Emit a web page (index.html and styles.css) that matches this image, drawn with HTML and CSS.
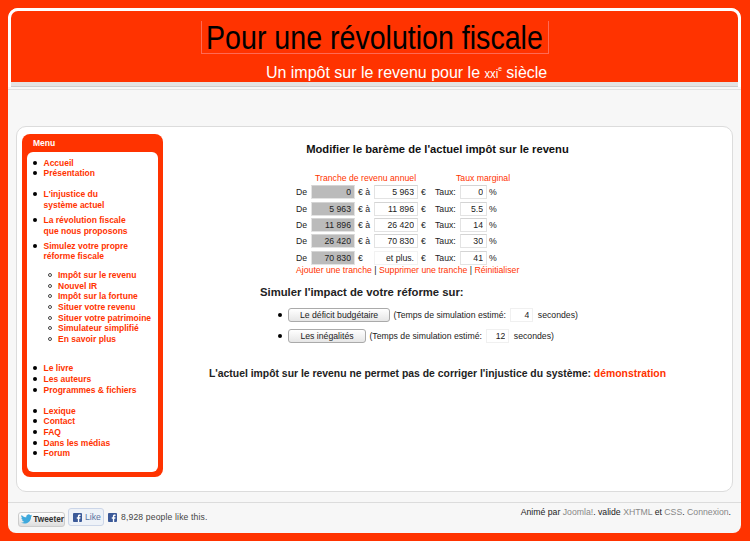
FILE: index.html
```html
<!DOCTYPE html>
<html lang="fr">
	<head>
		<meta charset="UTF-8">
		<meta name="viewport" content="width=device-width, initial-scale=1.0">
		<title>Pour une révolution fiscale</title>
		<link rel="stylesheet" href="styles.css">
	</head>
	<body>
		<div class="wrapper">
			<header class="top">
				<div class="banner">
					<h1 class="site-title"><span class="squeeze">Pour une révolution fiscale</span></h1>
					<p class="site-sub"><span class="squeeze">Un impôt sur le revenu pour le <span class="sc">xxi</span><sup>e</sup> siècle</span></p>
				</div>
				<div class="band"></div>
			</header>
			<div class="rule"></div>

			<main class="content">
				<nav class="menu">
					<div class="menu-title">Menu</div>
					<div class="menu-body">
						<ul class="nav nav-a">
							<li><a href="#">Accueil</a></li>
							<li><a href="#">Présentation</a></li>
						</ul>
						<ul class="nav nav-b">
							<li><a href="#">L'injustice du<br>système actuel</a></li>
							<li><a href="#">La révolution fiscale<br>que nous proposons</a></li>
							<li><a href="#">Simulez votre propre<br>réforme fiscale</a></li>
						</ul>
						<ul class="nav sub">
							<li><a href="#">Impôt sur le revenu</a></li>
							<li><a href="#">Nouvel IR</a></li>
							<li><a href="#">Impôt sur la fortune</a></li>
							<li><a href="#">Situer votre revenu</a></li>
							<li><a href="#">Situer votre patrimoine</a></li>
							<li><a href="#">Simulateur simplifié</a></li>
							<li><a href="#">En savoir plus</a></li>
						</ul>
						<ul class="nav nav-c">
							<li><a href="#">Le livre</a></li>
							<li><a href="#">Les auteurs</a></li>
							<li><a href="#">Programmes &amp; fichiers</a></li>
						</ul>
						<ul class="nav nav-d">
							<li><a href="#">Lexique</a></li>
							<li><a href="#">Contact</a></li>
							<li><a href="#">FAQ</a></li>
							<li><a href="#">Dans les médias</a></li>
							<li><a href="#">Forum</a></li>
						</ul>
					</div>
				</nav>

				<section class="article">
					<h2 class="heading">Modifier le barème de l'actuel impôt sur le revenu</h2>

					<div class="bareme">
						<div class="bareme-head">
							<span class="head-tranche">Tranche de revenu annuel</span>
							<span class="head-taux">Taux marginal</span>
						</div>
						<div class="row">
							<span class="de">De</span>
							<input class="field from" value="0" readonly>
							<span class="unit">€ à</span>
							<input class="field to" value="5 963">
							<span class="eur">€</span>
							<span class="taux">Taux:</span>
							<input class="field pct" value="0">
							<span>%</span>
						</div>
						<div class="row">
							<span class="de">De</span>
							<input class="field from" value="5 963" readonly>
							<span class="unit">€ à</span>
							<input class="field to" value="11 896">
							<span class="eur">€</span>
							<span class="taux">Taux:</span>
							<input class="field pct" value="5.5">
							<span>%</span>
						</div>
						<div class="row">
							<span class="de">De</span>
							<input class="field from" value="11 896" readonly>
							<span class="unit">€ à</span>
							<input class="field to" value="26 420">
							<span class="eur">€</span>
							<span class="taux">Taux:</span>
							<input class="field pct" value="14">
							<span>%</span>
						</div>
						<div class="row">
							<span class="de">De</span>
							<input class="field from" value="26 420" readonly>
							<span class="unit">€ à</span>
							<input class="field to" value="70 830">
							<span class="eur">€</span>
							<span class="taux">Taux:</span>
							<input class="field pct" value="30">
							<span>%</span>
						</div>
						<div class="row">
							<span class="de">De</span>
							<input class="field from" value="70 830" readonly>
							<span class="unit">€</span>
							<input class="field to plain" value="et plus." readonly>
							<span class="eur">€</span>
							<span class="taux">Taux:</span>
							<input class="field pct" value="41">
							<span>%</span>
						</div>
						<div class="actions">
							<a href="#">Ajouter une tranche</a> | <a href="#">Supprimer une tranche</a> | <a href="#">Réinitialiser</a>
						</div>
					</div>

					<h3 class="sim-title">Simuler l'impact de votre réforme sur:</h3>
					<ul class="sim-list">
						<li>
							<button class="btn btn-wide" type="button">Le déficit budgétaire</button>
							<span>(Temps de simulation estimé:</span>
							<input class="field time" value="4">
							<span>secondes)</span>
						</li>
						<li>
							<button class="btn btn-short" type="button">Les inégalités</button>
							<span>(Temps de simulation estimé:</span>
							<input class="field time" value="12">
							<span>secondes)</span>
						</li>
					</ul>

					<p class="demo">L'actuel impôt sur le revenu ne permet pas de corriger l'injustice du système: <a href="#">démonstration</a></p>
				</section>
			</main>

			<footer class="foot">
				<div class="social">
					<a class="tweet" href="#">
						<svg class="bird" viewBox="0 0 24 24" width="12" height="12"><path fill="#3fa9dc" d="M23.6 4.6c-.9.4-1.8.7-2.800.8 1-.6 1.800-1.600 2.100-2.700-.9.600-2 1-3.100 1.200a4.900 4.900 0 0 0-8.400 4.500C7.400 8.200 3.800 6.200 1.400 3.200a4.900 4.900 0 0 0 1.500 6.600c-.8 0-1.600-.2-2.200-.6v.1c0 2.400 1.700 4.400 3.900 4.800-.7.200-1.500.2-2.200.1.600 2 2.400 3.400 4.600 3.400A9.900 9.900 0 0 1 0 19.600 14 14 0 0 0 7.500 21.800c9.100 0 14-7.500 14-14v-.6c1-.7 1.800-1.600 2.100-2.600z"/></svg>
						Tweeter
					</a>
					<a class="like" href="#">
						<svg class="fb" viewBox="0 0 10 10" width="9" height="9"><rect width="10" height="10" rx="1" fill="#3b5998"/><path fill="#fff" d="M6.900 10V6.300h1.200l.2-1.500H6.900v-.9c0-.4.100-.7.700-.7h.8V1.900c-.1 0-.6-.1-1.100-.1-1.100 0-1.900.7-1.900 1.900v1.100H4.200v1.500h1.200V10z"/></svg>
						Like
					</a>
					<svg class="fb fb-count" viewBox="0 0 10 10" width="9" height="9"><rect width="10" height="10" rx="1" fill="#3b5998"/><path fill="#fff" d="M6.900 10V6.300h1.200l.2-1.500H6.900v-.9c0-.4.100-.7.700-.7h.8V1.900c-.1 0-.6-.1-1.100-.1-1.100 0-1.900.7-1.900 1.900v1.100H4.200v1.500h1.200V10z"/></svg>
					<span class="count">8,928 people like this.</span>
				</div>
				<p class="credits">Animé par <a href="#">Joomla!</a>. valide <a href="#">XHTML</a> et <a href="#">CSS</a>. <a href="#">Connexion</a>.</p>
			</footer>
		</div>
	</body>
</html>
```

FILE: styles.css
```css
html, body {
	margin: 0;
	height: 100%;
	overflow: hidden;
}
body {
	background-color: #ff3300;
	padding: 8px 8px 0 8px;
	box-sizing: border-box;
	font-family: "Liberation Sans", Arial, sans-serif;
	font-size: 8.7px;
	color: #222;
}
a {
	text-decoration: none;
	color: #ff3300;
}
.wrapper {
	width: 733px;
	height: 525px;
	background-color: #f7f7f7;
	border-radius: 10px 10px 8px 8px;
	display: flex;
	flex-direction: column;
}

/* header */
.top {
	border: 3px solid #fff;
	border-bottom: none;
	border-radius: 10px 10px 0 0;
	background-color: #fff;
}
.banner {
	height: 71px;
	background-color: #ff3300;
	border-radius: 7px 7px 0 0;
	display: flex;
	flex-direction: column;
	align-items: center;
	box-sizing: border-box;
	padding-top: 10px;
}
/* no narrow face installed, so the header type is squeezed */
.squeeze {
	display: inline-block;
	white-space: nowrap;
}
.site-title {
	margin: 0;
	width: 348px;
	height: 33px;
	box-sizing: border-box;
	border: 1px solid #ff6a55;
	border-top: none;
	display: flex;
	justify-content: center;
	font-weight: normal;
	font-size: 33px;
	line-height: 34px;
	color: #000;
}
.site-title .squeeze {
	flex: none;
	transform: scaleX(0.866);
}
.site-sub {
	margin: 9px 0 0 0;
	width: 348px;
	padding-right: 1px;
	box-sizing: border-box;
	font-size: 17px;
	line-height: 20px;
	text-align: right;
	color: #fff;
}
.site-sub .squeeze {
	transform: scaleX(0.94);
	transform-origin: right center;
}
.sc {
	font-size: 12px;
}
.site-sub sup {
	font-size: 7px;
	line-height: 0;
}
.band {
	height: 5px;
	background-color: #e3e3e3;
	border-bottom: 1px solid #ccc;
	box-sizing: border-box;
}
.rule {
	height: 1px;
	margin-top: 2px;
	background-color: #e2e2e2;
}

/* main box */
.content {
	margin: 36px 8px 0 8px;
	height: 366px;
	box-sizing: border-box;
	background-color: #fff;
	border: 1px solid #dcdcdc;
	border-radius: 10px;
	padding: 7px 5px;
	display: flex;
	align-items: flex-start;
}

/* menu */
.menu {
	width: 141px;
	height: 343px;
	flex: none;
	box-sizing: border-box;
	background-color: #ff3300;
	border-radius: 8px;
	padding: 0 5px 5px 5px;
	display: flex;
	flex-direction: column;
}
.menu-title {
	height: 18px;
	line-height: 18px;
	padding-left: 6px;
	font-size: 8.5px;
	font-weight: bold;
	color: #fff;
}
.menu-body {
	flex: 1;
	background-color: #fff;
	border-radius: 6px;
	font-size: 8.5px;
	font-weight: bold;
	line-height: 10.67px;
	padding-top: 5.500px;
}
.nav {
	margin: 0;
	padding: 0 0 0 16.500px;
	list-style: none;
}
.nav li::before {
	content: "";
	display: inline-block;
	box-sizing: border-box;
	width: 4px;
	height: 4px;
	margin: 0 6.500px 0 -10.500px;
	vertical-align: 1px;
	border-radius: 50%;
	background-color: #000;
}
.nav-b {
	margin-top: 10.500px;
}
.nav-b li {
	margin-bottom: 4.300px;
}
.sub {
	margin-top: 8px;
	padding-left: 31px;
}
.sub li::before {
	background-color: #fff;
	border: 1px solid #444;
}
.nav-c {
	margin-top: 18.500px;
}
.nav-d {
	margin-top: 10.500px;
}

/* simulator */
.article {
	flex: 1;
	min-width: 0;
	color: #222;
}
.heading {
	margin: 8px 0 0 0;
	padding-right: 15px;
	font-size: 11.2px;
	line-height: 14px;
	text-align: center;
	color: #111;
}
.bareme {
	margin: 16px 0 0 133px;
	width: 240px;
}
.bareme-head {
	height: 12px;
	line-height: 12px;
	color: #ff3300;
	display: flex;
}
.head-tranche {
	margin-left: 19px;
	width: 141px;
}
.row {
	height: 16.400px;
	display: flex;
	align-items: center;
	white-space: nowrap;
}
.de {
	width: 15px;
}
.field {
	box-sizing: border-box;
	height: 14px;
	padding: 0 3px;
	margin: 0;
	border: 1px solid #e3e3e3;
	border-top-color: #d4d4d4;
	background-color: #fff;
	font-family: "Liberation Sans", sans-serif;
	font-size: 8.7px;
	color: #222;
	text-align: right;
	outline: none;
}
.from {
	width: 44px;
	background-color: #bbb;
}
.unit {
	width: 16px;
	margin-left: 3px;
}
.to {
	width: 44px;
}
.plain {
	border-color: #f2f2f2;
}
.eur {
	width: 14px;
	margin-left: 3px;
}
.taux {
	width: 25px;
}
.pct {
	width: 27px;
	margin-right: 2px;
}
.actions {
	margin-top: -1px;
	line-height: 11px;
	white-space: nowrap;
}
.sim-title {
	margin: 9px 0 0 97px;
	font-size: 11.3px;
	line-height: 14px;
	color: #222;
}
.sim-list {
	margin: 9px 0 0 0;
	padding: 0 0 0 125px;
	list-style: none;
}
.sim-list li {
	height: 21px;
}
.sim-list li::before {
	content: "";
	display: inline-block;
	width: 4px;
	height: 4px;
	margin: 0 3.600px 0 -10px;
	vertical-align: middle;
	border-radius: 50%;
	background-color: #000;
}
.sim-list li > * {
	vertical-align: middle;
}
.btn {
	box-sizing: border-box;
	height: 14px;
	padding: 0;
	margin: 0 1px 0 0;
	border: 1px solid #aaa;
	border-radius: 3px;
	background: linear-gradient(#fff, #e6e6e6);
	font-family: "Liberation Sans", sans-serif;
	font-size: 8.7px;
	color: #222;
}
.btn-wide {
	width: 102px;
}
.btn-short {
	width: 78px;
}
.time {
	width: 23px;
	margin: 0 2px;
	border-color: #f0f0f0;
}
.demo {
	margin: 17px 0 0 0;
	padding-right: 15px;
	font-size: 10.4px;
	font-weight: bold;
	line-height: 14px;
	text-align: center;
	color: #222;
	white-space: nowrap;
}

/* footer */
.foot {
	margin-top: 10px;
	flex: 1;
	border-top: 1px solid #dcdcdc;
	padding: 4px 10px 0 10px;
	display: flex;
	justify-content: space-between;
	align-items: flex-start;
}
.social {
	display: flex;
	align-items: center;
	height: 18px;
	margin-top: 1px;
}
.tweet {
	box-sizing: border-box;
	width: 47px;
	height: 15px;
	display: flex;
	align-items: center;
	gap: 1px;
	padding-left: 2px;
	margin-top: 4px;
	border: 1px solid #ccc;
	border-radius: 3px;
	background: linear-gradient(#fff, #dedede);
	font-weight: bold;
	font-size: 8.3px;
	color: #333;
}
.like {
	box-sizing: border-box;
	width: 36px;
	height: 18px;
	margin-left: 3px;
	display: flex;
	align-items: center;
	gap: 3px;
	padding-left: 4px;
	border: 1px solid #ccd6e8;
	border-radius: 3px;
	background-color: #eef2f8;
	color: #5b72a0;
}
.fb-count {
	margin-left: 4px;
}
.count {
	margin-left: 4px;
	font-size: 8.6px;
	letter-spacing: 0.15px;
	color: #444;
}
.credits {
	margin: -1px 0 0 0;
	line-height: 12px;
	color: #222;
}
.credits a {
	color: #888;
}
```
